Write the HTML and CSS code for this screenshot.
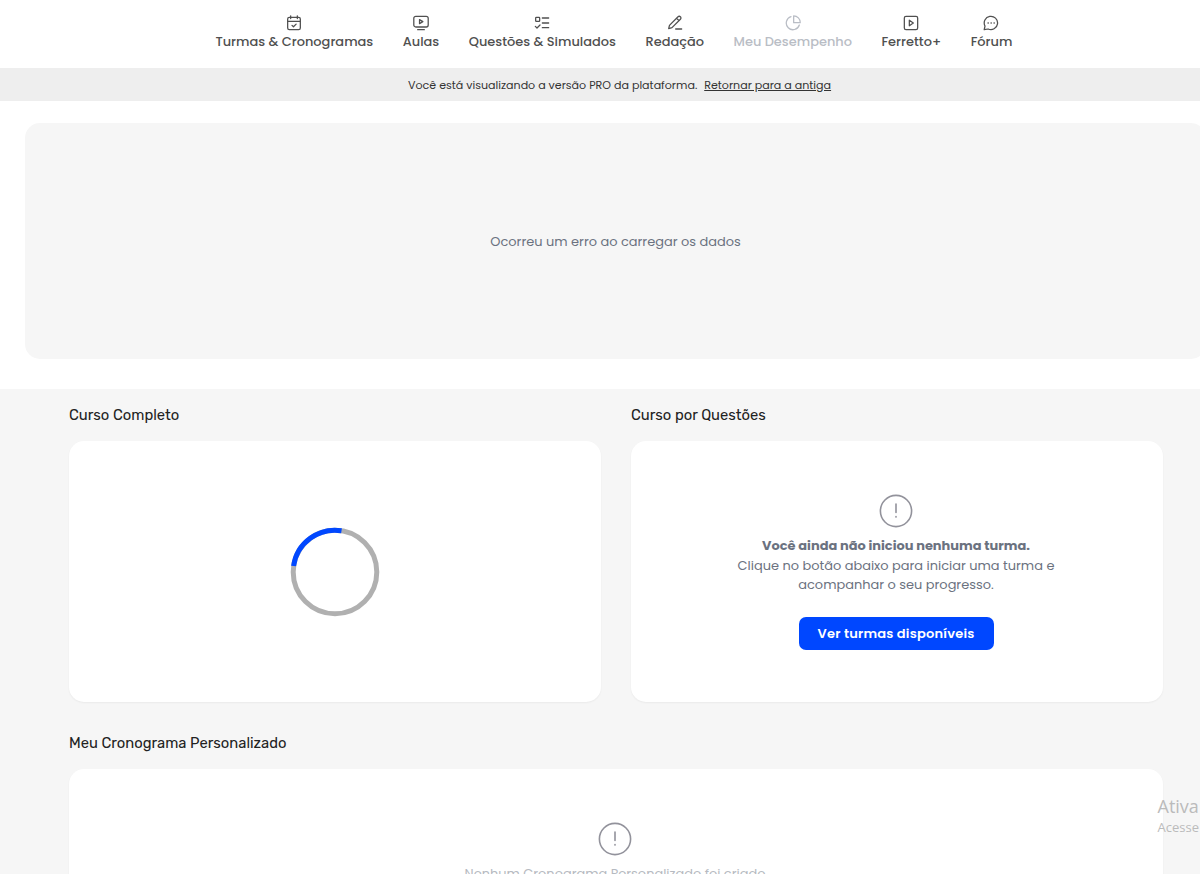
FILE: index.html
```html
<!DOCTYPE html>
<html lang="pt-BR">
<head>
    <meta charset="UTF-8">
    <meta name="viewport" content="width=device-width, initial-scale=1.0">
    <title>Meu Desempenho</title>
    <link rel="stylesheet" href="styles.css">
</head>
<body>
    <div class="page">
        <nav class="menu">
            <a class="menu-item">
                <svg viewBox="0 0 24 24"><rect x="2.5" y="3.5" width="19" height="18.5" rx="2.5"/><path d="M2.5 9.5h19M7 1.3v4M17 1.3v4M9 15.5l2.2 2.2 4-4"/></svg>
                <span>Turmas &amp; Cronogramas</span>
            </a>
            <a class="menu-item">
                <svg viewBox="0 0 24 24"><rect x="1.2" y="2" width="21.6" height="16" rx="3"/><path d="M9.8 7v6l5-3zM7 22h10"/></svg>
                <span>Aulas</span>
            </a>
            <a class="menu-item">
                <svg viewBox="0 0 24 24"><rect x="2.5" y="3.5" width="6" height="6" rx="1"/><path d="M2 17l2.5 2.5L9 15M12.5 4.5H22M12.5 12H22M12.5 19H22"/></svg>
                <span>Questões &amp; Simulados</span>
            </a>
            <a class="menu-item">
                <svg viewBox="0 0 24 24"><path d="M2.5 20.5l1.2-5L16.5 2.7a2.4 2.4 0 0 1 3.6 0 2.4 2.4 0 0 1 0 3.6L7.5 19zM14.5 5l3.3 3.3M13 21h9"/></svg>
                <span>Redação</span>
            </a>
            <a class="menu-item active">
                <svg viewBox="0 0 24 24"><path d="M9 2.5a10 10 0 1 0 12.5 12.5M13 1.3a9.8 9.8 0 0 1 9.8 10.2H13z"/></svg>
                <span>Meu Desempenho</span>
            </a>
            <a class="menu-item">
                <svg viewBox="0 0 24 24"><rect x="2" y="2" width="20" height="20" rx="2.5"/><path d="M9.5 7.8v8.4l6-4.2z"/></svg>
                <span>Ferretto+</span>
            </a>
            <a class="menu-item">
                <svg viewBox="0 0 24 24"><path d="M1.8 22l1.2-5.4A10 10 0 1 1 7.6 21zM7.5 12h.5M12 12h.5M16.5 12h.5"/></svg>
                <span>Fórum</span>
            </a>
        </nav>

        <div class="version-bar">
            <span>Você está visualizando a versão PRO da plataforma.</span>
            <a class="version-link">Retornar para a antiga</a>
        </div>

        <div class="error-box">
            <p>Ocorreu um erro ao carregar os dados</p>
        </div>

        <main class="content">
            <div class="courses">
                <section>
                    <h2>Curso Completo</h2>
                    <div class="card card-loading">
                        <svg class="spinner" viewBox="0 0 90 90">
                            <circle cx="45" cy="45" r="41.8"/>
                            <path d="M3.6 39A41.8 41.8 0 0 1 51.5 3.7"/>
                        </svg>
                    </div>
                </section>
                <section>
                    <h2>Curso por Questões</h2>
                    <div class="card">
                        <svg class="alert" viewBox="0 0 34 34"><circle cx="17" cy="17" r="15.6"/><path d="M17 10v8.5M17 22.5v.6"/></svg>
                        <p class="empty-title">Você ainda não iniciou nenhuma turma.</p>
                        <p class="empty-text">Clique no botão abaixo para iniciar uma turma e<br>acompanhar o seu progresso.</p>
                        <button type="button">Ver turmas disponíveis</button>
                    </div>
                </section>
            </div>
            <section>
                <h2>Meu Cronograma Personalizado</h2>
                <div class="card">
                    <svg class="alert" viewBox="0 0 34 34"><circle cx="17" cy="17" r="15.6"/><path d="M17 10v8.5M17 22.5v.6"/></svg>
                    <p class="schedule-text">Nenhum Cronograma Personalizado foi criado</p>
                </div>
            </section>
        </main>
    </div>

    <div class="watermark">
        <div class="watermark-title">Ativa</div>
        <div>Acesse</div>
    </div>
</body>
</html>
```

FILE: styles.css
```css
* {
    box-sizing: border-box;
}
body {
    margin: 0;
    height: 874px;
    position: relative;
    overflow: hidden;
    background: #fff;
    font-family: Poppins, Inter, sans-serif;
    color: #444;
}
p, h2 {
    margin: 0;
    white-space: nowrap;
}
svg {
    display: block;
    fill: none;
    stroke: currentColor;
    stroke-linecap: round;
    stroke-linejoin: round;
}
.page {
    width: 1231px;
}

/* Top menu */
.menu {
    display: flex;
    gap: 29.5px;
    height: 68px;
    padding: 15px 0 0 215.4px;
}
.menu-item {
    display: flex;
    flex-direction: column;
    align-items: center;
    font-size: 12.94px;
    font-weight: 500;
    line-height: 22px;
    white-space: nowrap;
    color: #505050;
}
.menu-item svg {
    width: 16px;
    height: 16px;
    stroke-width: 1.9;
}
.menu-item.active {
    color: #b9bdc5;
}

/* Version notice */
.version-bar {
    display: flex;
    gap: 7px;
    height: 33px;
    padding-left: 408px;
    background: #eee;
    font-size: 11.08px;
    line-height: 34px;
    color: #333;
    white-space: nowrap;
}
.version-link {
    text-decoration: underline;
}

.error-box {
    display: flex;
    align-items: center;
    justify-content: center;
    height: 236px;
    margin: 22px 25px 30px;
    padding-top: 2px;
    border-radius: 15px;
    background: #f6f6f6;
    font-size: 12.95px;
    color: #6b7280;
}

/* Courses */
.content {
    height: 500px;
    padding: 15px 68px 0 69px;
    background: #f6f6f6;
}
.courses {
    display: grid;
    grid-template-columns: 1fr 1fr;
    gap: 30px;
    margin-bottom: 30px;
}
h2 {
    padding-top: 1px;
    margin-bottom: 15px;
    font-family: Rubik, Roboto, sans-serif;
    font-size: 14.78px;
    font-weight: 400;
    line-height: 21px;
    color: #222;
}
.card {
    display: flex;
    flex-direction: column;
    align-items: center;
    height: 261px;
    padding: 53px 2px 0 0;
    border-radius: 15px;
    background: #fff;
    box-shadow: 0 1px 2px rgba(0, 0, 0, 0.05);
    font-size: 12.95px;
    line-height: 19.5px;
    color: #6b7280;
}
.card-loading {
    justify-content: center;
    padding: 0;
}
.spinner {
    width: 90px;
    height: 90px;
    stroke-width: 5;
    stroke: #b0b0b0;
    stroke-linecap: butt;
}
.spinner path {
    stroke: #0047ff;
}
.alert {
    width: 34px;
    height: 34px;
    margin-bottom: 8px;
    stroke: #92929b;
    stroke-width: 1.6;
}
.empty-title {
    font-weight: 700;
}
.empty-text {
    text-align: center;
}
button {
    width: 195px;
    height: 33px;
    margin-top: 22px;
    padding: 2px 0 0;
    border: none;
    border-radius: 7px;
    background: #0047ff;
    font-family: inherit;
    font-size: 13px;
    font-weight: 600;
    letter-spacing: 0.2px;
    color: #fff;
}
.schedule-text {
    color: #b6bac1;
}

/* System notice in the corner */
.watermark {
    position: absolute;
    top: 795px;
    left: 1157.5px;
    font-family: "Open Sans", sans-serif;
    font-size: 13px;
    line-height: 20px;
    white-space: nowrap;
    color: #bbb;
}
.watermark-title {
    font-size: 18px;
    line-height: 22px;
}
```
